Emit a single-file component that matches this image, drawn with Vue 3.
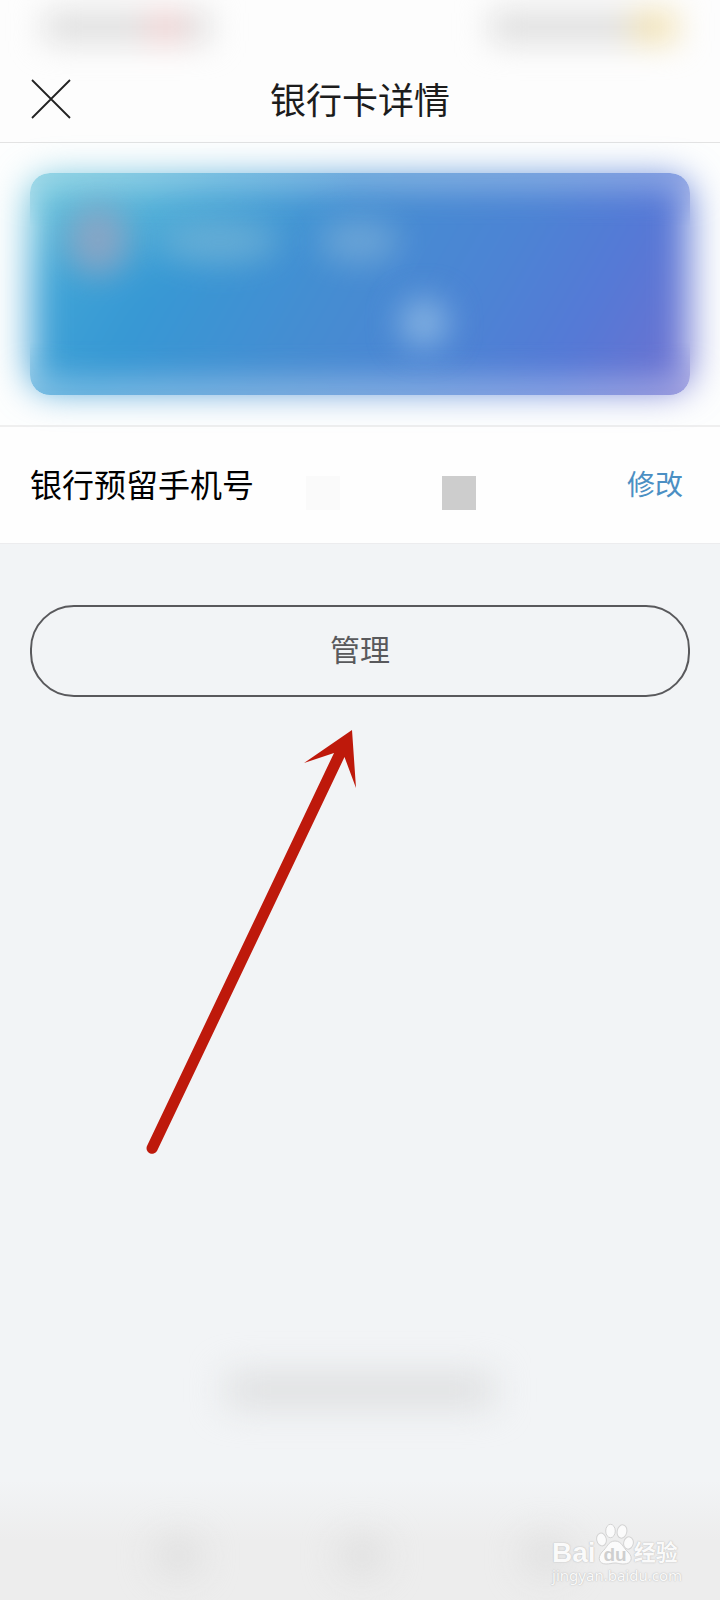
<script setup>
const title = '银行卡详情'
const phoneLabel = '银行预留手机号'
</script>

<template>
  <div class="page">
    <div class="status" aria-hidden="true">
      <div class="status-left"><i class="red"></i></div>
      <div class="status-right"><i class="yellow"></i></div>
    </div>
    <header class="header">
      <button class="close" type="button" aria-label="关闭">
        <svg viewBox="0 0 42 42" width="42" height="42">
          <path d="M2 2L40 40M40 2L2 40" fill="none" stroke="#222" stroke-width="1.8" />
        </svg>
      </button>
      <h1>{{ title }}</h1>
    </header>

    <section class="card-area">
      <div class="card">
        <div class="glow"></div>
        <div class="edge"></div>
        <i class="spot logo"></i>
        <i class="spot name"></i>
        <i class="spot kind"></i>
        <i class="spot digits"></i>
      </div>
    </section>

    <section class="phone">
      <span class="label">{{ phoneLabel }}</span>
      <span class="mosaic" aria-hidden="true"><i></i><i></i></span>
      <a href="#">修改</a>
    </section>

    <main class="body">
      <button class="manage" type="button">管理</button>
      <svg class="arrow" viewBox="0 0 212 426" width="212" height="426" aria-hidden="true">
        <path
          d="M206 0L158 33L188 23L1 416A5.6 5.6 0 0 0 11 421L198.500 27L210 58Z"
          fill="#be190b"
        />
      </svg>
      <div class="hint" aria-hidden="true"></div>
    </main>

    <footer class="nav">
      <div class="keys" aria-hidden="true"><i></i><i></i><i></i></div>
      <div class="watermark">
        <div class="brand">
          <span class="bai">Bai</span>
          <svg viewBox="0 0 38 42" width="38" height="42" role="img" aria-label="du">
            <g fill="#fbfbfb" stroke="#d3d3d3" stroke-width="1">
              <ellipse cx="5.5" cy="16.5" rx="4.8" ry="6.5" transform="rotate(-12 5.5 16.5)" />
              <ellipse cx="14.5" cy="8" rx="4.8" ry="6.7" />
              <ellipse cx="26" cy="8.5" rx="4.8" ry="6.7" transform="rotate(12 26 8.5)" />
              <ellipse cx="32.5" cy="20" rx="4.8" ry="6.2" transform="rotate(12 32.5 20)" />
              <path d="M19 18C26 18 27 25 32 29C38 35 35 41 28 41C23 41 22 40 19 40C16 40 14 41 10 41C3 41 1 35 6 29C11 25 12 18 19 18Z" />
            </g>
            <text x="19" y="38" text-anchor="middle" class="du">du</text>
          </svg>
          <span class="exp">经验</span>
        </div>
        <div class="url">jingyan.baidu.com</div>
      </div>
    </footer>
  </div>
</template>

<style>
body {
  margin: 0;
  background: #f2f4f6;
}
</style>

<style scoped>
.page {
  min-height: 100vh;
  display: flex;
  flex-direction: column;
  overflow: hidden;
  background: #f2f4f6;
  font-family: "Liberation Sans", "Noto Sans CJK SC", sans-serif;
}
.page * {
  box-sizing: border-box;
}
button {
  padding: 0;
  border: 0;
  background: none;
  font: inherit;
}
.status {
  height: 62px;
  display: flex;
  justify-content: space-between;
  padding: 12px 44px 0 44px;
  background: #fdfdfd;
}
.status-left,
.status-right {
  height: 30px;
  display: flex;
  filter: blur(16px);
  background: #dcdcdc;
}
.status-left {
  width: 166px;
  padding-left: 104px;
}
.status-right {
  width: 186px;
  justify-content: flex-end;
}
.red {
  width: 34px;
  background: #f0cccc;
}
.yellow {
  width: 44px;
  background: #f0deaa;
}
.header {
  height: 81px;
  display: grid;
  grid-template-columns: 42px 1fr 42px;
  align-items: center;
  padding: 0 30px;
  background: #fdfdfd;
  border-bottom: 1px solid #e3e3e3;
}
.close {
  align-self: start;
  height: 42px;
  margin-top: 16px;
  line-height: 0;
}
h1 {
  margin: 0;
  text-align: center;
  font-size: 36px;
  line-height: 40px;
  font-weight: 400;
  color: #1c1c1c;
}
.card-area {
  padding: 30px;
  background: #fdfefe;
  border-bottom: 2px solid #efefef;
}
.card {
  position: relative;
  height: 222px;
}
.glow,
.edge {
  position: absolute;
  inset: 0;
  border-radius: 20px;
  background:
    radial-gradient(ellipse at 0 0, #7cd0dcb0, transparent 35%),
    linear-gradient(120deg, #46acd8 0%, #3798d4 24%, #468cd2 48%, #4c84d4 66%, #5579d6 82%, #7070d0 100%);
}
.glow {
  inset: 6px 0;
  filter: blur(18px);
}
.edge {
  opacity: 0.6;
  mask-image: linear-gradient(#000, transparent 54px, transparent calc(100% - 54px), #000);
}
.spot {
  position: absolute;
  border-radius: 50%;
  filter: blur(16px);
}
.logo {
  left: 38px;
  top: 32px;
  width: 60px;
  height: 70px;
  background: #92a4c2;
  opacity: 0.85;
}
.name {
  left: 130px;
  top: 48px;
  width: 120px;
  height: 42px;
  background: #76b4d6;
  opacity: 0.7;
}
.kind {
  left: 288px;
  top: 46px;
  width: 82px;
  height: 44px;
  background: #84b4da;
  opacity: 0.6;
}
.digits {
  left: 370px;
  top: 126px;
  width: 48px;
  height: 48px;
  background: #86b3e2;
}
.phone {
  height: 116px;
  display: flex;
  align-items: center;
  padding: 2px 37px 0 30px;
  background: #fefefe;
}
.label {
  font-size: 32px;
  line-height: 40px;
  color: #000;
}
.mosaic {
  display: flex;
  gap: 102px;
  padding-top: 14px;
  margin-left: 52px;
}
.mosaic i {
  width: 34px;
  height: 34px;
  background: #cdcdcd;
}
.mosaic i:first-child {
  background: #fafafa;
}
.phone a {
  margin-left: auto;
  font-size: 28px;
  line-height: 40px;
  color: #4b8fc3;
  text-decoration: none;
}
.body {
  display: flex;
  flex-direction: column;
  padding: 61px 30px 0;
  border-top: 1px solid #ececee;
}
.manage {
  height: 92px;
  border: 2px solid #59595c;
  border-radius: 44px;
  font-size: 30px;
  line-height: 40px;
  color: #59595c;
}
.arrow {
  margin: 33px 0 0 116px;
}
.hint {
  align-self: center;
  width: 266px;
  height: 30px;
  margin-top: 219px;
  background: #dbdcdd;
  filter: blur(18px);
}
.nav {
  position: relative;
  height: 120px;
  margin-top: auto;
  background: linear-gradient(#ededed00, #ededed 60px);
}
.keys {
  display: flex;
  justify-content: space-between;
  padding: 58px 152px 0 156px;
}
.keys i {
  width: 44px;
  height: 36px;
  border-radius: 50%;
  background: #dcdcdc;
  filter: blur(18px);
}
.watermark {
  position: absolute;
  right: 38px;
  bottom: 15px;
  color: #fafafa;
  text-shadow: 0 0 1px #bbb, 0 0 2px #ccc;
}
.brand {
  display: flex;
  align-items: flex-end;
}
.bai {
  font-size: 28px;
  line-height: 24px;
  font-weight: 700;
}
.exp {
  font-size: 22px;
  line-height: 24px;
  font-weight: 700;
}
.du {
  font-size: 19px;
  font-weight: 700;
  fill: #cfcfcf;
  text-shadow: none;
}
.url {
  font-family: "Noto Sans", sans-serif;
  font-size: 15px;
  line-height: 20px;
}
</style>
